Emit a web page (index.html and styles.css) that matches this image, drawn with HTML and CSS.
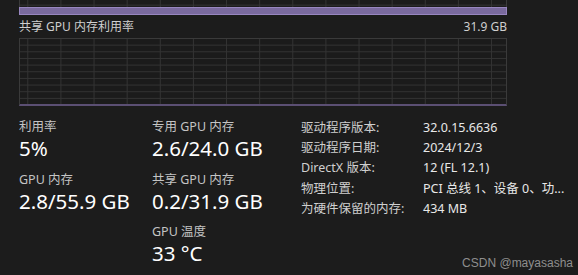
FILE: index.html
```html
<!DOCTYPE html>
<html lang="zh-CN">
  <head>
    <meta charset="UTF-8" />
    <meta name="viewport" content="width=device-width, initial-scale=1.0" />
    <title>GPU</title>
    <link rel="stylesheet" href="styles.css">
  </head>
  <body>
    <div class="panel">
      <div class="chart chart-top">
        <div class="fill"></div>
      </div>

      <div class="chart-label">
        <span>共享 GPU 内存利用率</span>
        <span>31.9 GB</span>
      </div>
      <div class="chart chart-shared"></div>

      <div class="stats">
        <div class="col">
          <div class="stat">
            <div class="label">利用率</div>
            <div class="value">5%</div>
          </div>
          <div class="stat">
            <div class="label">GPU 内存</div>
            <div class="value">2.8/55.9 GB</div>
          </div>
        </div>

        <div class="col">
          <div class="stat">
            <div class="label">专用 GPU 内存</div>
            <div class="value">2.6/24.0 GB</div>
          </div>
          <div class="stat">
            <div class="label">共享 GPU 内存</div>
            <div class="value">0.2/31.9 GB</div>
          </div>
          <div class="stat">
            <div class="label">GPU 温度</div>
            <div class="value">33 °C</div>
          </div>
        </div>

        <div class="info">
          <span class="key">驱动程序版本:</span>
          <span class="val">32.0.15.6636</span>
          <span class="key">驱动程序日期:</span>
          <span class="val">2024/12/3</span>
          <span class="key">DirectX 版本:</span>
          <span class="val">12 (FL 12.1)</span>
          <span class="key">物理位置:</span>
          <span class="val">PCI 总线 1、设备 0、功...</span>
          <span class="key">为硬件保留的内存:</span>
          <span class="val">434 MB</span>
        </div>
      </div>
    </div>

    <div class="watermark">CSDN @mayasasha</div>
  </body>
</html>
```

FILE: styles.css
```css
html,
body {
  margin: 0;
  height: 100%;
}

body {
  background-color: #1c1c1c;
  color: #c9c9c9;
  font-family: "Noto Sans", "Noto Sans CJK SC", sans-serif;
  overflow: hidden;
}

.panel {
  padding: 0 71px 0 19px;
}

.chart {
  box-sizing: border-box;
  border: 1px solid #3a3a3a;
  background-color: #1b1b1b;
  background-image:
    linear-gradient(to right, #333 1px, transparent 1px),
    linear-gradient(to bottom, #333 1px, transparent 1px);
  background-size: 33.14px 100%, 100% 6.66px;
  background-position: 7.3px 0, 0 -1px;
}

.chart-top {
  height: 16px;
  margin-top: -1px;
  border-top: none;
  display: flex;
  flex-direction: column;
  justify-content: flex-end;
  border-bottom: none;
}

.fill {
  height: 8px;
  background-color: #7a6a9e;
  border: 1px solid #9886c0;
  margin: 0 -1px;
  box-sizing: border-box;
}

.chart-label {
  display: flex;
  justify-content: space-between;
  font-size: 12px;
  line-height: 16px;
  margin-top: 4px;
  color: #cfcfcf;
}

.chart-shared {
  height: 68px;
  margin-top: 3px;
  border-bottom: 2px solid #5b4f73;
}

.stats {
  display: grid;
  grid-template-columns: 133px 149px auto;
  align-items: start;
  margin-top: 12px;
}

.stat {
  margin-bottom: 10.5px;
}

.label {
  font-size: 12.5px;
  line-height: 18px;
  color: #c4c4c4;
}

.value {
  font-size: 20.5px;
  line-height: 24px;
  color: #ffffff;
}

.info {
  display: grid;
  grid-template-columns: 122px auto;
  row-gap: 2.2px;
  font-size: 12.5px;
  line-height: 18px;
  padding-top: 1px;
  white-space: nowrap;
}

.key {
  color: #cfcfcf;
}

.val {
  color: #e8e8e8;
}

.watermark {
  position: absolute;
  right: 5px;
  bottom: 5px;
  font-family: "Liberation Sans", Arial, sans-serif;
  font-size: 12px;
  color: #8e8e8e;
}
```
